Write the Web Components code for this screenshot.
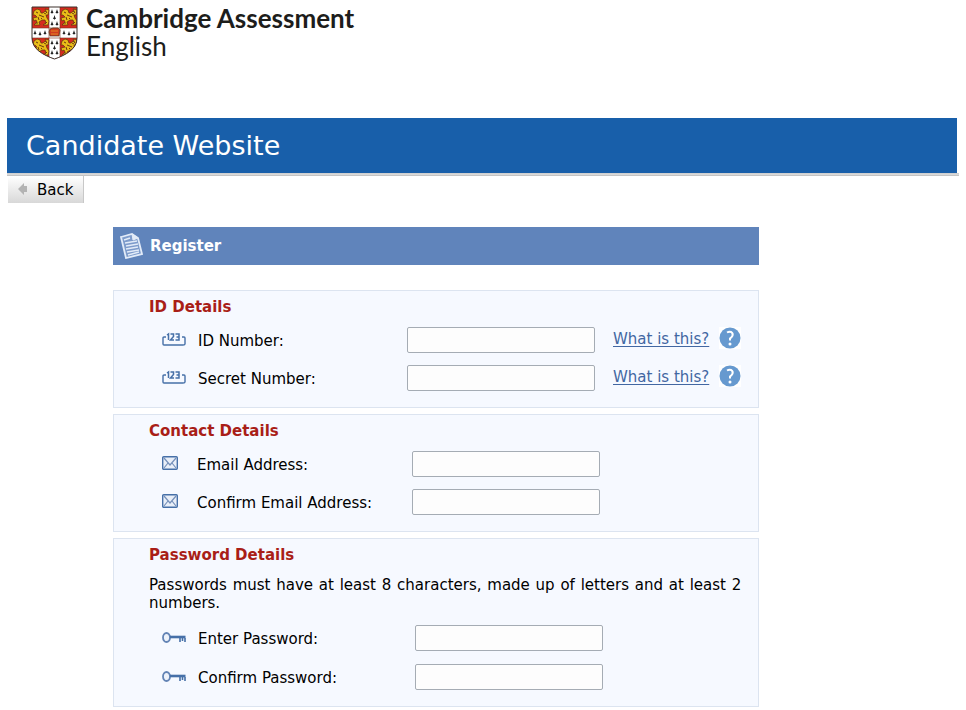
<!DOCTYPE html>
<html lang="en">
<head>
<meta charset="utf-8">
<title>Candidate Website</title>
<style>
body { margin: 0; background: #fff; color: #000; font: 15px/18px Verdana, "DejaVu Sans", sans-serif; }
</style>
</head>
<body>
<candidate-page>
  <brand-logo slot="brand"></brand-logo>
  <site-banner>Candidate Website</site-banner>
  <back-button>Back</back-button>
  <register-form>
    <section-title>Register</section-title>
    <form-panel heading="ID Details" class="id">
      <form-field icon="digits" label="ID Number:" name="id-number" help="What is this?"></form-field>
      <form-field icon="digits" label="Secret Number:" name="secret-number" help="What is this?"></form-field>
    </form-panel>
    <form-panel heading="Contact Details" class="contact">
      <form-field icon="mail" label="Email Address:" name="email" type="email"></form-field>
      <form-field icon="mail" label="Confirm Email Address:" name="email-confirm" type="email"></form-field>
    </form-panel>
    <form-panel heading="Password Details" class="password">
      <p slot="note">Passwords must have at least 8 characters, made up of letters and at least 2 numbers.</p>
      <form-field icon="key" label="Enter Password:" name="password" type="password"></form-field>
      <form-field icon="key" label="Confirm Password:" name="password-confirm" type="password"></form-field>
    </form-panel>
  </register-form>
</candidate-page>

<script>
const define = (name, html, setup) => {
  const template = document.createElement('template');
  template.innerHTML = html;
  customElements.define(name, class extends HTMLElement {
    constructor() {
      super();
      this.attachShadow({ mode: 'open' }).append(template.content.cloneNode(true));
    }
    connectedCallback() { if (setup) setup(this, this.shadowRoot); }
  });
};

define('candidate-page', `
<style>
  :host { display: block; padding: 0 7px 3px; }
  header { box-sizing: border-box; min-height: 118px; padding: 4px 24px; }
</style>
<header><slot name="brand"></slot></header>
<main><slot></slot></main>`);

define('brand-logo', `
<style>
  :host { display: flex; align-items: end; gap: 8px; color: #1d1d1b; font: 26px/28px Lato, sans-serif; }
  svg { width: 47px; height: 54px; flex: none; }
  .name { display: grid; align-content: start; }
  strong { font-weight: 700; }
</style>
<svg viewBox="0 0 47 54" aria-hidden="true">
  <defs>
    <clipPath id="shield"><path d="M1 1H46V32C46 43 35 49 23.500 53C12 49 1 43 1 32Z"/></clipPath>
    <g id="lion">
      <path d="M1 2L4 0L7 1L8 4H10L12 2L14 4L12 0L16 1L15 6L13 6L14 9L16 12L15 16H10L13 14L12 11L9 11L6 13L7 16H1L4 13L3 11L1 12L0 9L4 8L2 6L0 6Z" fill="#e9bd18" stroke="#5b3511" stroke-width=".7"/>
      <path d="M3 3L5 4M6 6L11 8M11 4L13 5M5 8L6 11M9 9L8 10M3 14H5M12 15L14 13" stroke="#6b3a12" stroke-width="1"/>
    </g>
    <path id="ermine" d="M0 -2L.600 0L1.500 2H.500L0 3L-.500 2H-1.500L-.600 0Z"/>
  </defs>
  <g clip-path="url(#shield)">
    <path d="M0 0H47V54H0Z" fill="#d52b1e"/>
    <path d="M18 0H29V54H18ZM0 22H47V32H0Z" fill="#fff" stroke="#77321f" stroke-width=".6"/>
    <use href="#lion" x="2" y="3"/><use href="#lion" x="30" y="3"/>
    <use href="#lion" x="2" y="33"/><use href="#lion" x="30" y="33"/>
    <g fill="#222">
      <use href="#ermine" x="21" y="5"/><use href="#ermine" x="26" y="5"/><use href="#ermine" x="23.500" y="11"/>
      <use href="#ermine" x="21" y="17"/><use href="#ermine" x="26" y="17"/>
      <use href="#ermine" x="4" y="26"/><use href="#ermine" x="9" y="27"/><use href="#ermine" x="14" y="26"/>
      <use href="#ermine" x="33" y="26"/><use href="#ermine" x="38" y="27"/><use href="#ermine" x="43" y="26"/>
      <use href="#ermine" x="21" y="36"/><use href="#ermine" x="26" y="36"/><use href="#ermine" x="23.500" y="41"/>
      <use href="#ermine" x="21" y="46"/><use href="#ermine" x="26" y="46"/>
    </g>
    <path d="M19 23L22 22H27L29 24L28 30H19L18 26Z" fill="#cf3b1f" stroke="#50361b" stroke-width=".7"/>
    <path d="M20 25H27M20 28H27" stroke="#e38b22"/>
  </g>
  <path d="M1 1H46V32C46 43 35 49 23.500 53C12 49 1 43 1 32Z" fill="none" stroke="#3d302b" stroke-width="1"/>
</svg>
<div class="name"><strong>Cambridge Assessment</strong><span>English</span></div>`);

define('site-banner', `
<style>
  :host { display: block; padding-bottom: 2px; border-bottom: 1px solid #c4c4c4; background: linear-gradient(#ccc, #ddd) bottom / 100% 2px no-repeat; }
  h1 { margin: 0 2px 0 0; padding: 10px 19px; background: #185faa; color: #fff; font-weight: 400; font-size: 27px; line-height: 35px; }
</style>
<h1><slot></slot></h1>`);

define('back-button', `
<style>
  :host { display: flex; padding-left: 1px; }
  button { display: flex; align-items: center; gap: 9px; margin: 0; height: 27px; padding: 0 10px; border: 0; border-right: 1px solid #c8c8c8; background: linear-gradient(#fff, #d8d8d8); color: #000; font: inherit; }
  svg { width: 10px; height: 12px; margin-bottom: 2px; }
</style>
<button type="button"><svg viewBox="0 0 10 12" aria-hidden="true"><path d="M0 6L6 0V3H9V9H6V12Z" fill="#b3b3b3"/></svg><slot></slot></button>`);

define('register-form', `
<style>
  :host { display: block; margin: 24px 0 0 106px; max-width: 646px; }
  form { display: grid; gap: 6px; }
</style>
<form><slot></slot></form>`);

define('section-title', `
<style>
  :host { display: block; margin-bottom: 19px; }
  h2 { display: flex; align-items: center; gap: 7px; margin: 0; padding: 6px 7px; background: #6084bb; color: #fff; font-size: 15px; line-height: 26px; font-weight: 700; }
  svg { width: 23px; height: 26px; }
</style>
<h2><svg viewBox="0 0 23 26" fill="none" stroke="#e2ebf8" aria-hidden="true">
  <path d="M1 4L12 1L18 5L22 21L6 25Z" fill="#7d9bcb" stroke-width="1.800"/>
  <path d="M12 1L13 7L18 5Z" fill="#e2ebf8"/>
  <path d="M4 7L10 5M5 10L17 8M6 13L18 11M6 16L18 14M7 19L19 17M8 22L19 19" stroke-width="1.400"/>
</svg><slot></slot></h2>`);

define('form-panel', `
<style>
  :host { display: block; padding: 7px 17px 16px 35px; border: 1px solid #dce4f0; background: #f6f9ff; --lead: 36px; --label: 209px; --gap: 12px; }
  :host(.contact) { --lead: 35px; --label: 215px; }
  :host(.password) { --label: 217px; --gap: 13px; }
  h3 { margin: 0 0 11px; color: #a91e17; font-size: 15px; line-height: 18px; font-weight: 700; }
  :host(.password) h3 { margin-bottom: 12px; }
  .fields { display: grid; gap: var(--gap); padding-left: 13px; }
  ::slotted(p) { margin: 0 0 13px; text-align: justify; }
</style>
<h3></h3><slot name="note"></slot><div class="fields"><slot></slot></div>`,
(host, root) => { root.querySelector('h3').textContent = host.getAttribute('heading'); });

const line = 'fill="none" stroke="#4670a8" stroke-width="1.400"';
const icons = {
  digits: `<svg width="24" height="16" viewBox="0 0 24 16" ${line} aria-hidden="true">
    <path d="M4 5H2Q1 5 1 6V12Q1 13 2 13H21Q23 13 23 12V6Q23 5 22 5H20"/>
    <path d="M5 3L6.500 2V8M8.500 2H11.500V4.500L8.500 8H12M13.500 2H17V8H13.500M14.500 5H17" stroke-width="1.500"/></svg>`,
  mail: `<svg width="16" height="18" viewBox="0 0 16 18" ${line} aria-hidden="true">
    <rect x=".7" y="1.700" width="14.600" height="12.600" rx="1" fill="#e9eff8"/>
    <path d="M2 3L8 10L14 3M2 13L6 8M14 13L10 8" stroke="#7590ba" stroke-width="1.200"/></svg>`,
  key: `<svg width="24" height="12" viewBox="0 0 24 12" ${line} aria-hidden="true">
    <ellipse cx="4.500" cy="5.500" rx="3.500" ry="4.500" fill="#edf2fa" stroke="#6384b5" stroke-width="1.800"/>
    <path d="M8 5H23.500" stroke-width="2.600"/><path d="M18 6V10M20.500 6V9M23 6V10" stroke-width="1.600"/></svg>`
};

define('form-field', `
<style>
  :host { display: grid; grid-template-columns: var(--lead) var(--label) 188px auto; align-items: center; justify-content: start; }
  .icon { display: flex; }
  label { padding-top: 1px; }
  input { box-sizing: border-box; width: 100%; height: 26px; margin: 0; padding: 0 6px; border: 1px solid #a5acb4; border-radius: 2px; background: #fdfdfd; font: inherit; }
  .help { display: flex; align-items: center; gap: 10px; padding-left: 18px; height: 22px; margin-bottom: 4px; white-space: nowrap; }
  .help[hidden] { display: none; }
  .help svg { display: block; width: 22px; height: 22px; background: #fff; }
  a { padding-top: 2px; color: #4267a2; text-underline-offset: 2px; }
</style>
<span class="icon"></span>
<label for="box"></label>
<input id="box">
<span class="help" hidden><a href="#"></a><svg viewBox="0 0 22 22" aria-hidden="true">
  <circle cx="11" cy="11" r="10.500" fill="#6699cf"/>
  <path d="M8 5.500Q10 4.300 12.200 5Q14.500 6.500 13.300 9Q12.500 10.300 11 11.500V13.500" fill="none" stroke="#fff" stroke-width="2"/>
  <circle cx="11" cy="17" r="1.500" fill="#fff"/></svg></span>`,
(host, root) => {
  root.querySelector('.icon').innerHTML = icons[host.getAttribute('icon')];
  root.querySelector('label').textContent = host.getAttribute('label');
  const input = root.querySelector('input');
  input.type = host.getAttribute('type') || 'text';
  input.name = host.getAttribute('name');
  const help = host.getAttribute('help');
  if (help) {
    root.querySelector('.help').hidden = false;
    root.querySelector('a').textContent = help;
  }
});
</script>
</body>
</html>
